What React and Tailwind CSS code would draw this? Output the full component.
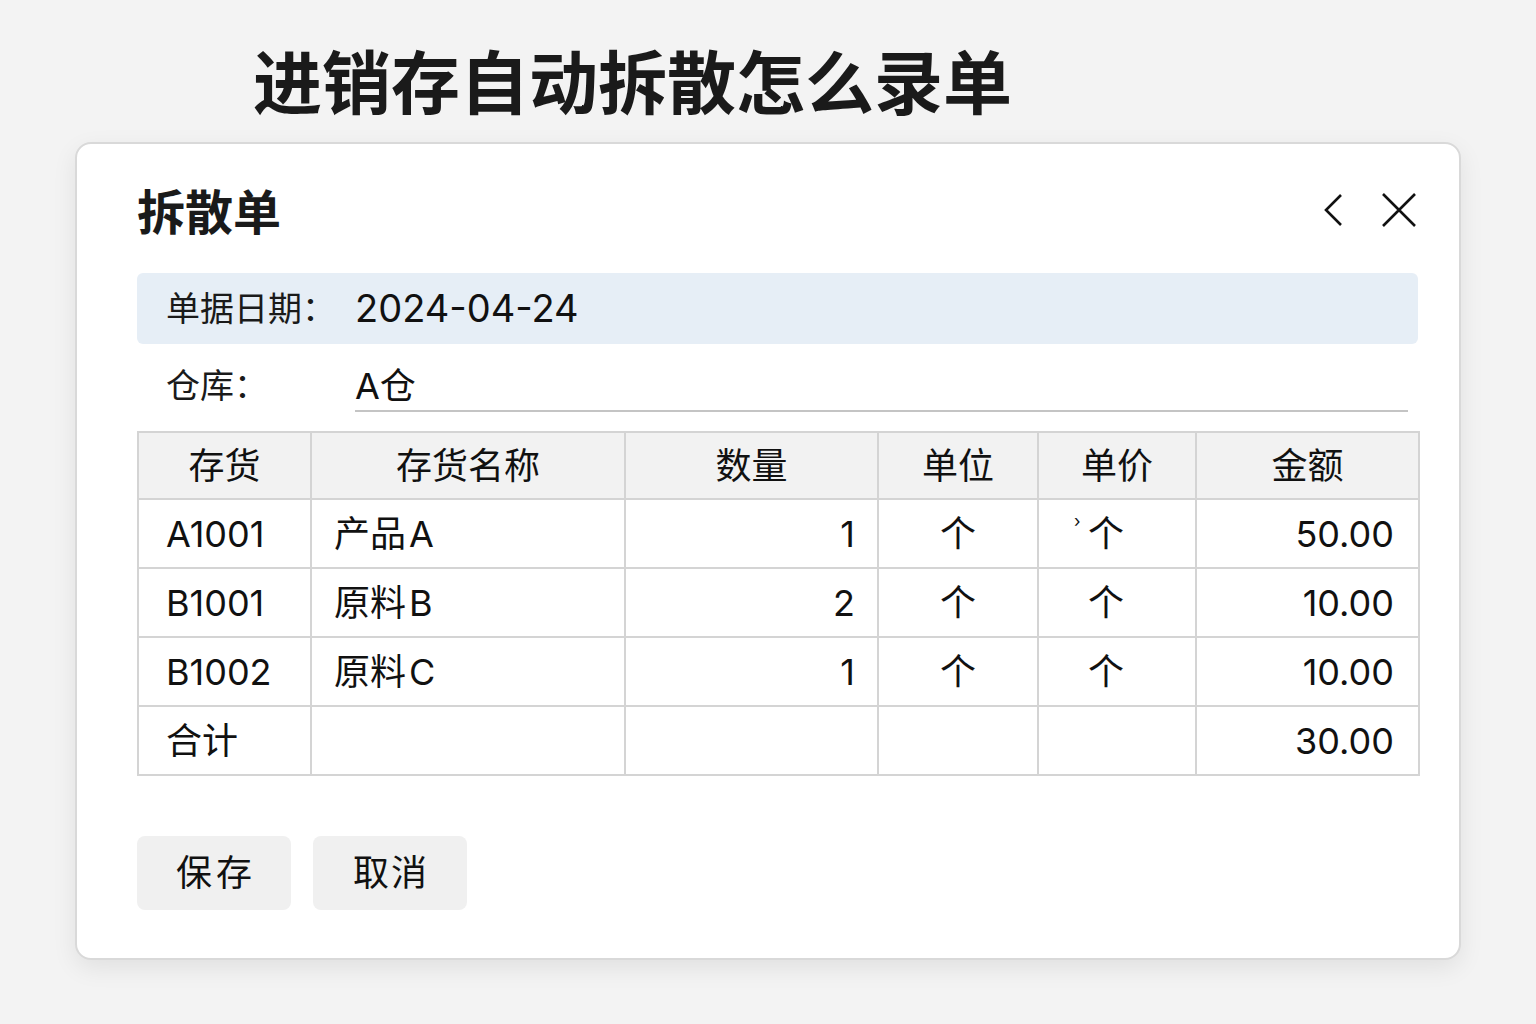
import React from "react";

const rows = [
  { code: "A1001", name: "产品", tail: "A", qty: "1", unit: "个", price: "个", mark: true, amount: "50.00" },
  { code: "B1001", name: "原料", tail: "B", qty: "2", unit: "个", price: "个", amount: "10.00" },
  { code: "B1002", name: "原料", tail: "C", qty: "1", unit: "个", price: "个", amount: "10.00" },
];

const font = { fontFamily: '"Inter", "Noto Sans CJK SC", sans-serif' };

const cell = "border-2 border-[#d4d4d4] h-[69px] text-[36px] text-[#111]";

const App = () => {
  return (
    <div className="min-h-screen w-full bg-[#f3f3f3] pb-[64px]" style={font}>
      <div className="h-[142px] pl-[253px] pt-[45px]">
        <h1
          className="text-[69px] font-bold leading-none text-[#1a1a1a]"
          style={{ fontFamily: '"Noto Sans CJK SC", sans-serif' }}
        >
          进销存自动拆散怎么录单
        </h1>
      </div>

      <div className="ml-[75px] w-[1386px] h-[818px] bg-white rounded-[16px] border-2 border-[#d9d9d9] shadow-[0_8px_24px_rgba(0,0,0,0.08)] pl-[60px] pr-[41px] flex flex-col">
        <div className="flex items-center justify-between h-[50px] mt-[40px]">
          <h2
            className="text-[48px] font-bold text-[#1a1a1a] leading-none"
            style={{ fontFamily: '"Noto Sans CJK SC", sans-serif' }}
          >
            拆散单
          </h2>
          <div className="flex items-center gap-[38px] mr-[1px] mt-[2px]">
            <svg width="20" height="34" viewBox="0 0 20 34" fill="none">
              <path d="M18 2 L3 17 L18 32" stroke="#111" strokeWidth="2.6" />
            </svg>
            <svg width="36" height="36" viewBox="0 0 36 36" fill="none">
              <path d="M2 2 L34 34 M34 2 L2 34" stroke="#111" strokeWidth="2.6" />
            </svg>
          </div>
        </div>

        <div className="mt-[39px] h-[71px] rounded-[6px] bg-[#e6eef6] flex items-center">
          <span className="w-[218px] pl-[29px] text-[34px] text-[#1a1a1a]">单据日期：</span>
          <span className="text-[38px] text-[#111]">2024-04-24</span>
        </div>

        <div className="flex h-[68px] pt-[20px]">
          <span className="w-[218px] pl-[29px] text-[34px] leading-[44px] text-[#1a1a1a]">仓库：</span>
          <div className="flex-1 mr-[10px] border-b-2 border-[#c4c4c4] text-[36px] leading-[44px] text-[#111]">
            A仓
          </div>
        </div>

        <table className="mt-[19px] w-[1281px] border-collapse table-fixed">
          <colgroup>
            <col className="w-[173px]" />
            <col className="w-[314px]" />
            <col className="w-[253px]" />
            <col className="w-[160px]" />
            <col className="w-[158px]" />
            <col className="w-[223px]" />
          </colgroup>
          <thead>
            <tr className="bg-[#f2f2f2]">
              {["存货", "存货名称", "数量", "单位", "单价", "金额"].map((h) => (
                <th key={h} className={`${cell} !h-[67px] font-normal text-center`}>
                  {h}
                </th>
              ))}
            </tr>
          </thead>
          <tbody>
            {rows.map((r) => (
              <tr key={r.code}>
                <td className={`${cell} pl-[27px]`}>{r.code}</td>
                <td className={`${cell} pl-[22px]`}>
                  {r.name}
                  <span className="ml-[3px]">{r.tail}</span>
                </td>
                <td className={`${cell} text-right pr-[22px]`}>{r.qty}</td>
                <td className={`${cell} text-center`}>{r.unit}</td>
                <td className={`${cell} text-center pr-[22px]`}>
                  <span className="relative inline-block">
                    {r.mark && (
                      <span className="absolute -left-[14px] top-[6px] text-[17px] leading-none">›</span>
                    )}
                    {r.price}
                  </span>
                </td>
                <td className={`${cell} text-right pr-[24px]`}>{r.amount}</td>
              </tr>
            ))}
            <tr>
              <td className={`${cell} pl-[27px]`}>合计</td>
              <td className={cell}></td>
              <td className={cell}></td>
              <td className={cell}></td>
              <td className={cell}></td>
              <td className={`${cell} text-right pr-[24px]`}>30.00</td>
            </tr>
          </tbody>
        </table>

        <div className="flex gap-[22px] mt-[60px]">
          <button className="w-[154px] h-[74px] rounded-[8px] bg-[#f0f0f0] text-[36px] text-[#111] tracking-[4px] pl-[4px]">
            保存
          </button>
          <button className="w-[154px] h-[74px] rounded-[8px] bg-[#f0f0f0] text-[36px] text-[#111] tracking-[2px] pl-[2px]">
            取消
          </button>
        </div>
      </div>
    </div>
  );
};

export default App;
